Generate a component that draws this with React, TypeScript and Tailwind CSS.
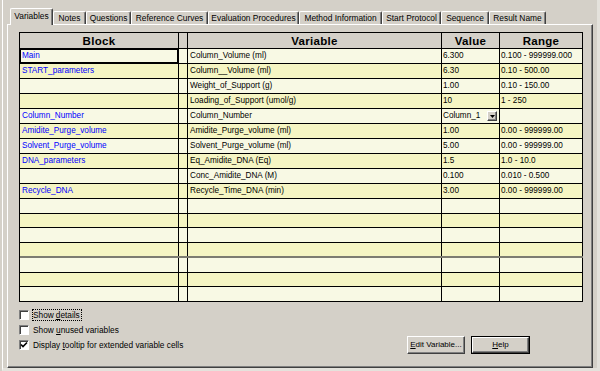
import React from "react";

type Row = { b: string; v: string; val: string; r: string; combo?: boolean };

const data: Row[] = [
  { b: "Main", v: "Column_Volume (ml)", val: "6.300", r: "0.100 - 999999.000" },
  { b: "START_parameters", v: "Column__Volume (ml)", val: "6.30", r: "0.10 - 500.00" },
  { b: "", v: "Weight_of_Support (g)", val: "1.00", r: "0.10 - 150.00" },
  { b: "", v: "Loading_of_Support (umol/g)", val: "10", r: "1 - 250" },
  { b: "Column_Number", v: "Column_Number", val: "Column_1", r: "", combo: true },
  { b: "Amidite_Purge_volume", v: "Amidite_Purge_volume (ml)", val: "1.00", r: "0.00 - 999999.00" },
  { b: "Solvent_Purge_volume", v: "Solvent_Purge_volume (ml)", val: "5.00", r: "0.00 - 999999.00" },
  { b: "DNA_parameters", v: "Eq_Amidite_DNA (Eq)", val: "1.5", r: "1.0 - 10.0" },
  { b: "", v: "Conc_Amidite_DNA (M)", val: "0.100", r: "0.010 - 0.500" },
  { b: "Recycle_DNA", v: "Recycle_Time_DNA (min)", val: "3.00", r: "0.00 - 999999.00" },
  { b: "", v: "", val: "", r: "" },
  { b: "", v: "", val: "", r: "" },
  { b: "", v: "", val: "", r: "" },
  { b: "", v: "", val: "", r: "" },
  { b: "", v: "", val: "", r: "" },
  { b: "", v: "", val: "", r: "" },
  { b: "", v: "", val: "", r: "" },
];

const tabs = [
  { label: "Variables", w: "w-[43px]", sel: true },
  { label: "Notes", w: "w-[33px]" },
  { label: "Questions", w: "w-[45px]" },
  { label: "Reference Curves", w: "w-[77px]" },
  { label: "Evaluation Procedures", w: "w-[91px]" },
  { label: "Method Information", w: "w-[83px]" },
  { label: "Start Protocol", w: "w-[59px]" },
  { label: "Sequence", w: "w-[48px]" },
  { label: "Result Name", w: "w-[57px]" },
];

function Check({ checked }: { checked?: boolean }) {
  return (
    <div className="w-[10px] h-[10px] shrink-0 border-t border-l border-[#808080] border-b border-r border-b-white border-r-white bg-white flex items-center justify-center shadow-[inset_1px_1px_0_#404040]">
      {checked && (
        <svg width="8" height="8" viewBox="0 0 8 8">
          <path d="M1 3.5 L3 5.5 L7 1.5" stroke="#000" strokeWidth="1.6" fill="none" />
        </svg>
      )}
    </div>
  );
}

export default function App() {
  const heights = ["h-[15px]", "h-[15px]", "h-[15px]", "h-[15px]", "h-[15px]", "h-[15px]", "h-[15px]", "h-[15px]", "h-[15px]", "h-[15px]", "h-[15px]", "h-[14px]", "h-[15px]", "h-[15px]", "h-[15px]", "h-[14px]", "h-[15px]"];
  return (
    <div className="w-[600px] h-[371px] bg-[#d4d0c8] overflow-hidden pl-[2px] font-['Liberation_Sans',Arial,sans-serif] text-black">
      <div className="h-[371px] border-l border-white border-r-[3px] border-b-[3px] border-r-[#e4e2dc] border-b-[#e4e2dc] pl-[4px] pt-[8px]">
        {/* Tabs */}
        <div className="flex items-end h-[16px] ml-[3px]">
          {tabs.map((t) =>
            t.sel ? (
              <div
                key={t.label}
                className={`${t.w} h-[17px] -mb-[1px] relative z-10 bg-[#d4d0c8] border-t border-l border-white border-r border-r-[#404040] shadow-[inset_-1px_0_0_#808080] rounded-tl-[2px] rounded-tr-[2px] flex items-start justify-center pt-[2px] text-[8.4px] leading-[10px]`}
              >
                {t.label}
              </div>
            ) : (
              <div
                key={t.label}
                className={`${t.w} h-[13px] bg-[#d4d0c8] border-t border-l border-white border-r border-r-[#404040] shadow-[inset_-1px_0_0_#808080] rounded-tl-[2px] rounded-tr-[2px] flex items-center justify-center text-[8.4px] leading-[10px] whitespace-nowrap`}
              >
                {t.label}
              </div>
            )
          )}
        </div>
        {/* Panel */}
        <div className="w-[586px] h-[344px] border-t border-l border-white border-r border-b border-r-[#404040] border-b-[#404040]">
          <div className="w-full h-full border-r border-b border-[#808080] pl-[11px] pt-[7px]">
            {/* Table */}
            <div className="w-[564px] border-t border-l border-black text-[8.2px] leading-[10px]">
              <div className="flex h-[16px] border-b border-black bg-[#d4d0c8] font-bold text-[11.5px] tracking-[0.3px]">
                <div className="w-[159px] border-r border-black flex items-center justify-center">Block</div>
                <div className="w-[9px] border-r border-black"></div>
                <div className="w-[254px] border-r border-black flex items-center justify-center">Variable</div>
                <div className="w-[58px] border-r border-black flex items-center justify-center">Value</div>
                <div className="w-[83px] border-r border-black flex items-center justify-center">Range</div>
              </div>
              {data.map((row, i) => {
                const bg = i % 2 === 0 ? "bg-[#f8f9e4]" : "bg-[#f5f5c3]";
                const bottom = i === 13 ? "border-b-2 border-[#7c7c70]" : "border-b border-black";
                return (
                  <div key={i} className={`flex ${heights[i]} ${bottom} ${bg}`}>
                    <div
                      className={`w-[159px] border-r border-black flex items-center pl-[2px] text-[#0000ff] whitespace-nowrap ${i === 0 ? "shadow-[inset_0_0_0_1px_#000]" : ""}`}
                    >
                      {row.b}
                    </div>
                    <div className="w-[9px] border-r border-black"></div>
                    <div className="w-[254px] border-r border-black flex items-center pl-[2px] whitespace-nowrap">{row.v}</div>
                    <div className="w-[58px] border-r border-black flex items-center pl-[1px] whitespace-nowrap">
                      {row.combo ? (
                        <div className="flex items-center justify-between w-full pr-[2px]">
                          <span>{row.val}</span>
                          <div className="w-[10px] h-[10px] bg-[#d4d0c8] border-t border-l border-white border-r border-b border-r-[#404040] border-b-[#404040] shadow-[inset_-1px_-1px_0_#808080] flex items-center justify-center">
                            <svg width="5" height="3" viewBox="0 0 5 3">
                              <path d="M0 0 H5 L2.5 3 Z" fill="#000" />
                            </svg>
                          </div>
                        </div>
                      ) : (
                        row.val
                      )}
                    </div>
                    <div className="w-[83px] border-r border-black flex items-center pl-[1px] whitespace-nowrap">{row.r}</div>
                  </div>
                );
              })}
            </div>
            {/* Bottom area */}
            <div className="flex w-[564px] mt-[8px] text-[8.3px] leading-[10px]">
              <div className="flex flex-col gap-[5px]">
                <div className="flex items-center h-[10px]">
                  <Check />
                  <span className="ml-[3px] h-[12px] border border-dotted border-black pr-[1px] flex items-center">
                    Show <span className="underline ml-[2px]">d</span>etails
                  </span>
                </div>
                <div className="flex items-center h-[10px]">
                  <Check />
                  <span className="ml-[4px]">
                    Show <span className="underline">u</span>nused variables
                  </span>
                </div>
                <div className="flex items-center h-[10px]">
                  <Check checked />
                  <span className="ml-[4px]">
                    Display <span className="underline">t</span>ooltip for extended variable cells
                  </span>
                </div>
              </div>
              <div className="ml-auto mr-[53px] mt-[26px] flex gap-[6px] self-start">
                <div className="w-[58px] h-[18px] bg-[#d4d0c8] border-t border-l border-white border-r border-b border-r-[#404040] border-b-[#404040] shadow-[inset_-1px_-1px_0_#808080] flex items-center justify-center text-[8px]">
                  <span>
                    <span className="underline">E</span>dit Variable...
                  </span>
                </div>
                <div className="w-[59px] h-[18px] border border-black">
                  <div className="w-full h-full bg-[#d4d0c8] border-t border-l border-white border-r border-b border-r-[#404040] border-b-[#404040] shadow-[inset_-1px_-1px_0_#808080] flex items-center justify-center text-[8px]">
                    <span>
                      <span className="underline">H</span>elp
                    </span>
                  </div>
                </div>
              </div>
            </div>
          </div>
        </div>
      </div>
    </div>
  );
}
